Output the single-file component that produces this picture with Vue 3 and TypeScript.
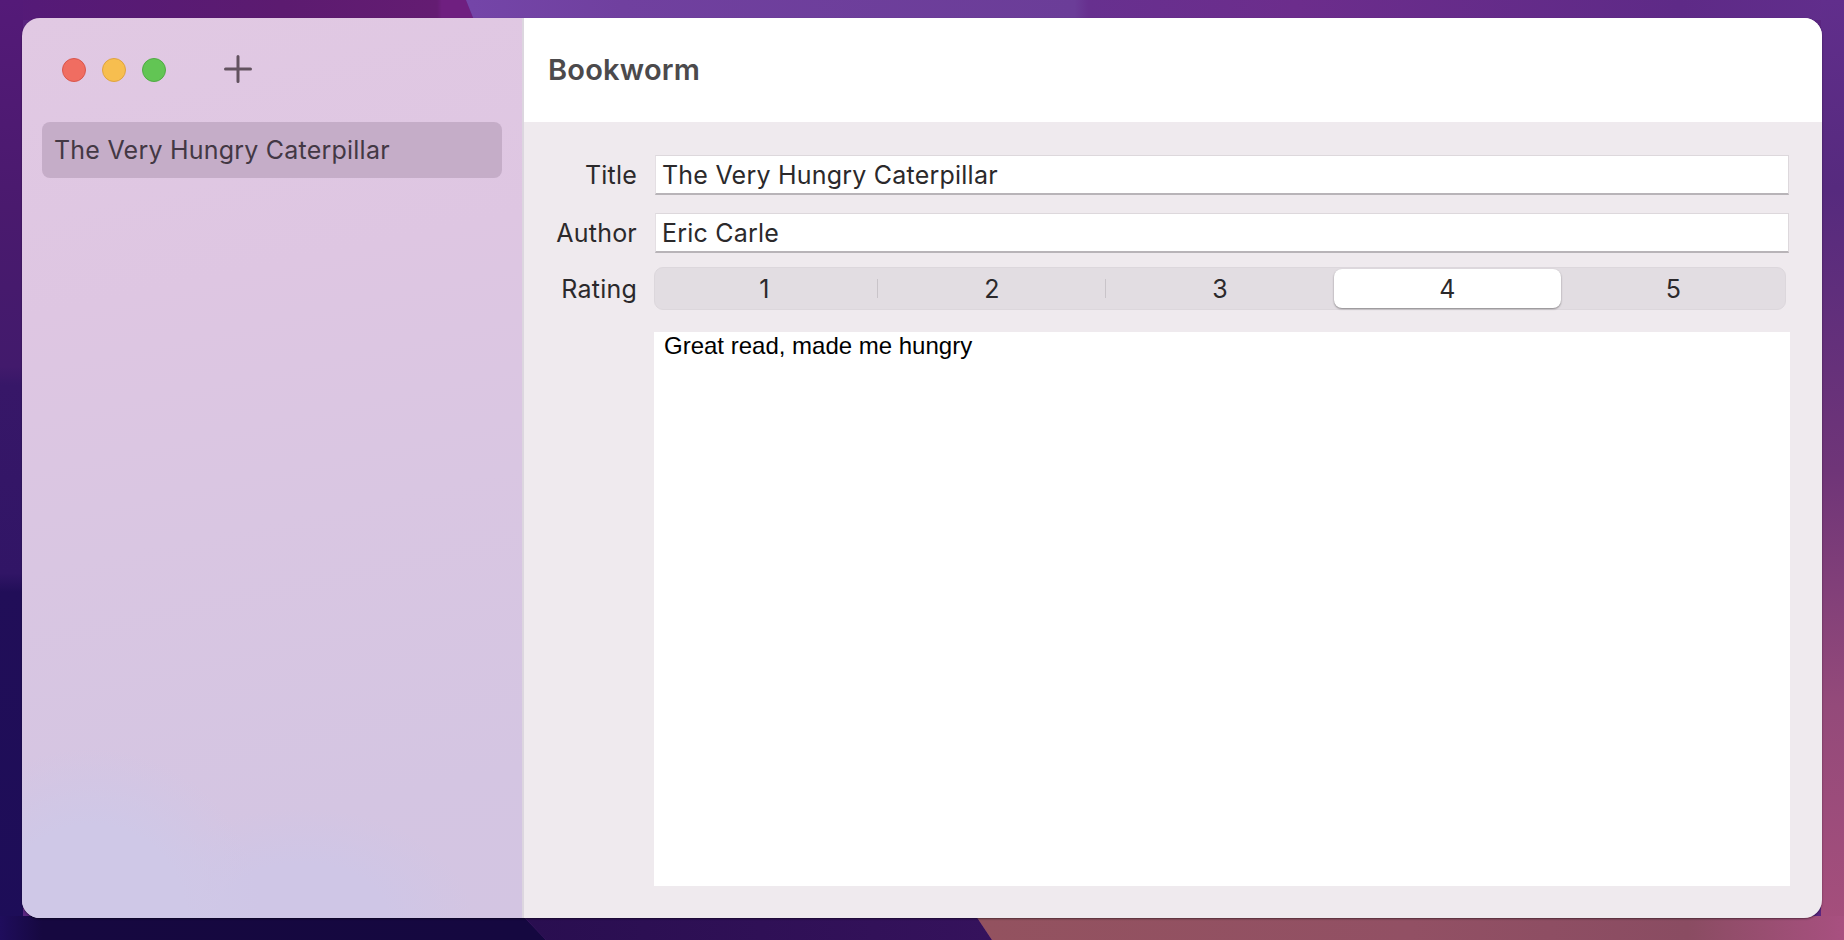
<script setup lang="ts">
const ratings: number[] = [1, 2, 3, 4, 5]
const selected = 4
</script>

<template>
  <div class="desktop">
    <svg class="wallpaper" width="1844" height="940" viewBox="0 0 1844 940" aria-hidden="true">
      <defs>
        <linearGradient id="topLeft" gradientUnits="userSpaceOnUse" x1="0" y1="0" x2="470" y2="0">
          <stop offset="0" stop-color="#541a78" />
          <stop offset="0.6" stop-color="#5c1b70" />
          <stop offset="0.93" stop-color="#641c72" />
          <stop offset="0.94" stop-color="#6f1f80" />
          <stop offset="1" stop-color="#6f1f80" />
        </linearGradient>
        <linearGradient id="topRight" gradientUnits="userSpaceOnUse" x1="470" y1="0" x2="1844" y2="0">
          <stop offset="0" stop-color="#7445a8" />
          <stop offset="0.11" stop-color="#70409f" />
          <stop offset="0.44" stop-color="#6b3d98" />
          <stop offset="0.45" stop-color="#67308f" />
          <stop offset="0.6" stop-color="#6c2d8c" />
          <stop offset="0.88" stop-color="#5e2a87" />
          <stop offset="1" stop-color="#612e8c" />
        </linearGradient>
        <linearGradient id="leftEdge" gradientUnits="userSpaceOnUse" x1="0" y1="0" x2="0" y2="940">
          <stop offset="0" stop-color="#541a78" />
          <stop offset="0.22" stop-color="#4a1a6e" />
          <stop offset="0.39" stop-color="#421a6c" />
          <stop offset="0.41" stop-color="#371768" />
          <stop offset="0.61" stop-color="#311566" />
          <stop offset="0.63" stop-color="#210e58" />
          <stop offset="1" stop-color="#1d0d58" />
        </linearGradient>
        <linearGradient id="rightEdge" gradientUnits="userSpaceOnUse" x1="0" y1="0" x2="0" y2="940">
          <stop offset="0" stop-color="#612e8c" />
          <stop offset="0.2" stop-color="#562a7e" />
          <stop offset="0.5" stop-color="#6f3578" />
          <stop offset="0.75" stop-color="#944a7a" />
          <stop offset="1" stop-color="#a64f7c" />
        </linearGradient>
        <linearGradient id="bottomLeft" gradientUnits="userSpaceOnUse" x1="0" y1="0" x2="530" y2="0">
          <stop offset="0" stop-color="#1f0d5c" />
          <stop offset="0.08" stop-color="#160840" />
          <stop offset="1" stop-color="#150840" />
        </linearGradient>
        <linearGradient id="bottomMid" gradientUnits="userSpaceOnUse" x1="530" y1="0" x2="990" y2="0">
          <stop offset="0" stop-color="#290e50" />
          <stop offset="1" stop-color="#35125c" />
        </linearGradient>
        <linearGradient id="bottomRight" gradientUnits="userSpaceOnUse" x1="976" y1="0" x2="1844" y2="0">
          <stop offset="0" stop-color="#93525f" />
          <stop offset="0.5" stop-color="#925064" />
          <stop offset="0.82" stop-color="#8a4c62" />
          <stop offset="1" stop-color="#a85080" />
        </linearGradient>
      </defs>
      <rect x="0" y="0" width="1844" height="940" fill="#5a2580" />
      <polygon points="0,0 466,0 474,20 0,20" fill="url(#topLeft)" />
      <polygon points="466,0 1844,0 1844,20 474,20" fill="url(#topRight)" />
      <rect x="0" y="0" width="23" height="940" fill="url(#leftEdge)" />
      <rect x="1821" y="0" width="23" height="940" fill="url(#rightEdge)" />
      <polygon points="0,916 523,916 546,940 0,940" fill="url(#bottomLeft)" />
      <polygon points="523,916 976,916 992,940 546,940" fill="url(#bottomMid)" />
      <polygon points="976,916 1844,916 1844,940 992,940" fill="url(#bottomRight)" />
    </svg>
    <div class="window">
      <aside class="sidebar">
        <div class="toolbar">
          <span class="light red"></span>
          <span class="light yellow"></span>
          <span class="light green"></span>
          <svg class="add" width="28" height="28" viewBox="0 0 28 28">
            <path d="M14 1.5V26.5M1.5 14H26.5" stroke="#62525f" stroke-width="3" stroke-linecap="round" fill="none" />
          </svg>
        </div>
        <div class="item">The Very Hungry Caterpillar</div>
      </aside>
      <main class="main">
        <header class="header"><span class="app-title">Bookworm</span></header>
        <div class="form">
          <div class="row">
            <label class="label">Title</label>
            <div class="field">The Very Hungry Caterpillar</div>
          </div>
          <div class="row second">
            <label class="label">Author</label>
            <div class="field">Eric Carle</div>
          </div>
          <div class="row third">
            <label class="label">Rating</label>
            <div class="segments">
              <div
                v-for="r in ratings"
                :key="r"
                class="segment"
                :class="{ active: r === selected, divided: r < 3 }"
              >{{ r }}</div>
            </div>
          </div>
          <div class="notes">Great read, made me hungry</div>
        </div>
      </main>
    </div>
  </div>
</template>

<style>
html, body { margin: 0; padding: 0; }
</style>

<style scoped>
.desktop {
  position: relative;
  width: 1844px;
  height: 940px;
  box-sizing: border-box;
  padding: 18px 22px 22px;
  overflow: hidden;
}
.wallpaper {
  position: absolute;
  left: 0;
  top: 0;
}
.window {
  position: relative;
  width: 1800px;
  height: 900px;
  display: flex;
  border-radius: 18px;
  overflow: hidden;
  box-shadow: 0 1px 2px rgba(0, 0, 0, 0.45);
  font-family: Inter, "Liberation Sans", sans-serif;
  letter-spacing: 0.22px;
}
.sidebar {
  width: 502px;
  flex: none;
  box-sizing: border-box;
  padding: 0 20px;
  border-right: 2px solid #dcd6df;
  background:
    radial-gradient(ellipse 170px 170px at 14% 100%, #cfc8e7 0 55%, rgba(207, 200, 231, 0) 100%),
    radial-gradient(ellipse 170px 110px at 56% 100%, #cfc6e6 0 50%, rgba(207, 198, 230, 0) 100%),
    linear-gradient(168deg, #e1c9e3 0%, #dec6e2 30%, #d9c6e2 55%, #d4c5e2 85%, #d3c5e2 100%);
}
.toolbar {
  height: 104px;
  display: flex;
  align-items: center;
  padding-left: 20px;
  gap: 16px;
}
.light {
  width: 24px;
  height: 24px;
  box-sizing: border-box;
  border-radius: 50%;
  border: 1px solid;
}
.red { background: #f06d61; border-color: #d9564c; }
.yellow { background: #f7be4f; border-color: #dfa33f; }
.green { background: #62c554; border-color: #50ab44; }
.add { margin-left: 42px; margin-top: -3px; }
.item {
  height: 56px;
  line-height: 56px;
  padding-left: 12px;
  border-radius: 8px;
  background: #c5adc8;
  color: #433844;
  font-size: 25px;
}
.main {
  flex: 1;
  display: flex;
  flex-direction: column;
  background: #efeaee;
}
.header {
  height: 104px;
  flex: none;
  box-sizing: border-box;
  padding: 0 0 2px 24px;
  display: flex;
  align-items: center;
  background: #fff;
  color: #4c4a4c;
  font-size: 29px;
  font-weight: 600;
}
.form {
  flex: 1;
  display: flex;
  flex-direction: column;
  padding: 33px 32px 32px 0;
}
.row {
  display: flex;
  align-items: center;
}
.second { margin-top: 18px; }
.third { margin-top: 14px; }
.label {
  width: 113px;
  flex: none;
  text-align: right;
  color: #2b292b;
  font-size: 25px;
}
.field {
  flex: 1;
  margin-left: 18px;
  margin-right: 1px;
  height: 40px;
  line-height: 38px;
  box-sizing: border-box;
  padding-left: 6px;
  background: #fff;
  border: 1px solid #ddd8dc;
  border-bottom: 2px solid #b8b4b8;
  border-left-color: #e4dfe3;
  color: #2b292b;
  font-size: 25px;
}
.segments {
  flex: 1;
  margin-left: 17px;
  margin-right: 4px;
  height: 43px;
  display: grid;
  grid-template-columns: 222px 228px 228px 227px 1fr;
  box-sizing: border-box;
  padding: 1px;
  border-radius: 9px;
  background: #e2dde2;
  border: 1px solid #dcd7dc;
}
.segment {
  position: relative;
  display: flex;
  align-items: center;
  justify-content: center;
  color: #2b292b;
  font-size: 25px;
}
.segment:first-child { padding-right: 5px; }
.segment:last-child { padding-left: 2px; }
.divided::after {
  content: "";
  position: absolute;
  right: 0;
  top: 10px;
  bottom: 10px;
  width: 1px;
  background: #c9c4c9;
}
.active {
  background: #fff;
  border-radius: 8px;
  box-shadow: 0 1px 2px rgba(0, 0, 0, 0.4);
}
.notes {
  flex: 1;
  margin-top: 22px;
  margin-left: 130px;
  padding: 0 0 0 10px;
  background: #fff;
  color: #000;
  font-family: "Liberation Sans", Arial, sans-serif;
  font-size: 24px;
  line-height: 28px;
  letter-spacing: 0;
}
</style>
